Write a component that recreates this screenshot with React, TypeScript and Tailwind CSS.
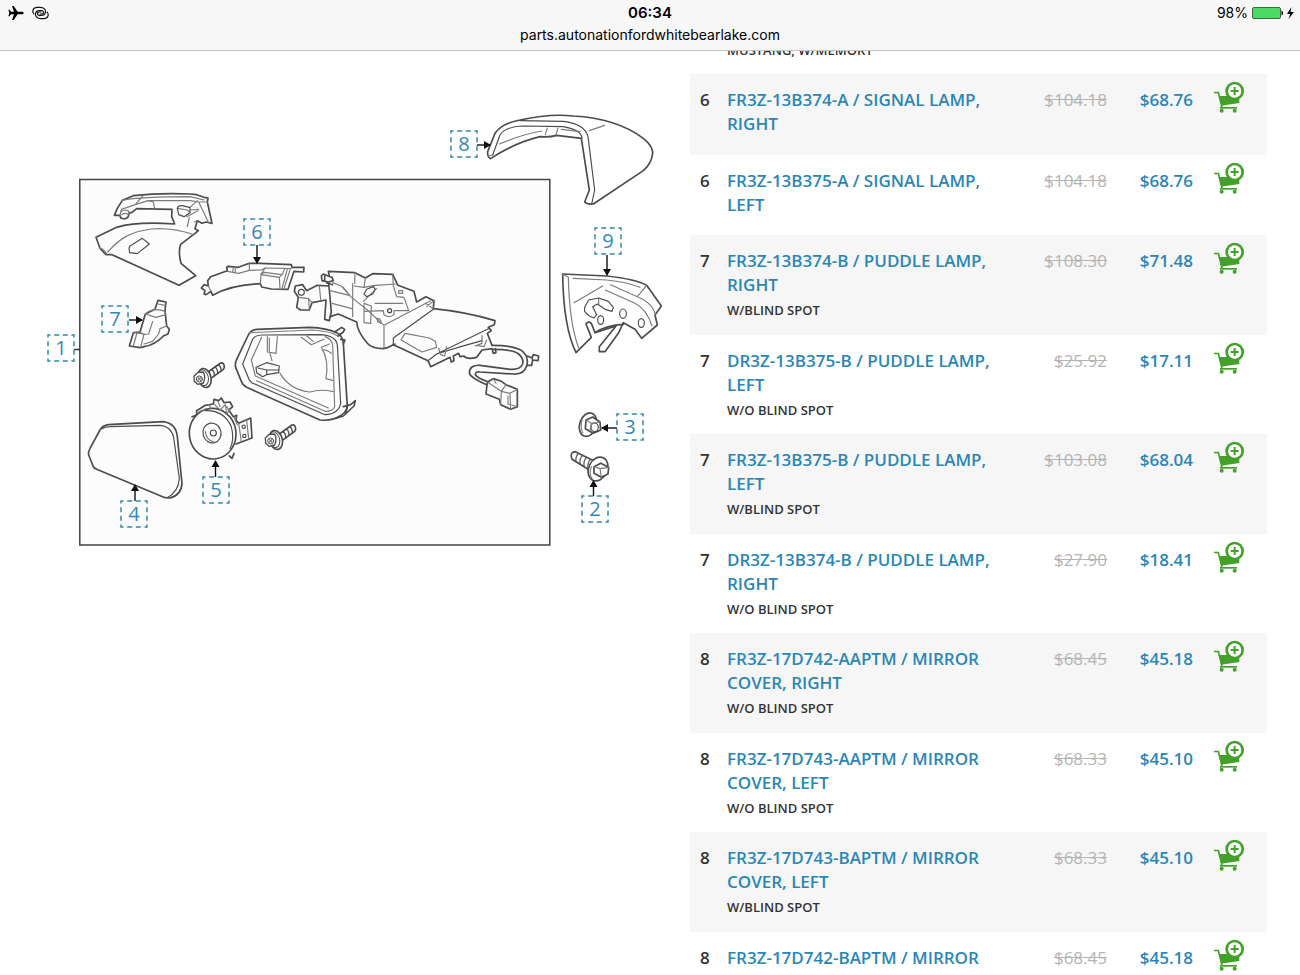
import type { ReactNode } from "react";

type Part = {
  callout: number;
  name: string;
  note?: string;
  list: string;
  price: string;
};

const parts: Part[] = [
  { callout: 6, name: "FR3Z-13B374-A / SIGNAL LAMP, RIGHT", list: "$104.18", price: "$68.76" },
  { callout: 6, name: "FR3Z-13B375-A / SIGNAL LAMP, LEFT", list: "$104.18", price: "$68.76" },
  { callout: 7, name: "FR3Z-13B374-B / PUDDLE LAMP, RIGHT", note: "W/BLIND SPOT", list: "$108.30", price: "$71.48" },
  { callout: 7, name: "DR3Z-13B375-B / PUDDLE LAMP, LEFT", note: "W/O BLIND SPOT", list: "$25.92", price: "$17.11" },
  { callout: 7, name: "FR3Z-13B375-B / PUDDLE LAMP, LEFT", note: "W/BLIND SPOT", list: "$103.08", price: "$68.04" },
  { callout: 7, name: "DR3Z-13B374-B / PUDDLE LAMP, RIGHT", note: "W/O BLIND SPOT", list: "$27.90", price: "$18.41" },
  { callout: 8, name: "FR3Z-17D742-AAPTM / MIRROR COVER, RIGHT", note: "W/O BLIND SPOT", list: "$68.45", price: "$45.18" },
  { callout: 8, name: "FR3Z-17D743-AAPTM / MIRROR COVER, LEFT", note: "W/O BLIND SPOT", list: "$68.33", price: "$45.10" },
  { callout: 8, name: "FR3Z-17D743-BAPTM / MIRROR COVER, LEFT", note: "W/BLIND SPOT", list: "$68.33", price: "$45.10" },
  { callout: 8, name: "FR3Z-17D742-BAPTM / MIRROR", list: "$68.45", price: "$45.18" },
];

// Centre of each callout on the 690 x 520 diagram
const callouts = [
  { n: 1, x: 61, y: 307 },
  { n: 2, x: 595, y: 468 },
  { n: 3, x: 630, y: 386 },
  { n: 4, x: 134, y: 473 },
  { n: 5, x: 216, y: 449 },
  { n: 6, x: 257, y: 191 },
  { n: 7, x: 115, y: 278 },
  { n: 8, x: 464, y: 103 },
  { n: 9, x: 608, y: 200 },
];

function StatusBar() {
  return (
    <header className="relative z-10 h-[51px] shrink-0 border-b border-[#c4c4c6] bg-[#f7f7f7] font-[Inter,sans-serif] text-black">
      <div className="grid grid-cols-3 items-center px-1.5 pt-1">
        <div className="flex items-center gap-2 pl-0.5">
          <svg width="16" height="16" viewBox="0 0 48 48" aria-label="Airplane mode">
            <path d="M47 24c0-3-3-4-6-4H29L17 3h-5l6 17H9l-5-6H1l3 10-3 10h3l5-6h9l-6 17h5l12-17h12c3 0 6-1 6-4z" />
          </svg>
          <svg width="17" height="14" viewBox="98 18 50 42" fill="none" stroke="#111" strokeWidth="3.500" strokeLinecap="round" aria-label="Hotspot">
            <path d="M103 42C97 34 100 22 113 22H122C134 22 139 30 138 37C137 43 133 46 126 46H120C113 46 111 37 119 36H124" />
            <path d="M103 42C97 34 100 22 113 22H122C134 22 139 30 138 37C137 43 133 46 126 46H120C113 46 111 37 119 36H124" transform="rotate(180 123 39)" />
          </svg>
        </div>
        <div className="text-center text-[15px] leading-[18px] font-semibold">06:34</div>
        <div className="flex items-center justify-end gap-1 text-[14px] leading-[18px]">
          <span>98%</span>
          <svg width="42" height="12" viewBox="0 0 42 12" aria-label="Battery charging">
            <rect x=".5" y=".5" width="28" height="11" rx="1.5" fill="#4cd964" stroke="#3c6b44" />
            <path d="M29.5 3.500c2 .5 2 4.500 0 5z" />
            <path d="M39.500 0 35 7h3.200L36.500 12 42 5h-3.500z" />
          </svg>
        </div>
      </div>
      <p className="pt-1 text-center text-[14px] leading-[18px]">
        parts.autonationfordwhitebearlake.com
      </p>
    </header>
  );
}

function CartIcon() {
  return (
    <svg width="32" height="32" viewBox="640 240 96 96" fill="#43a02a">
      <path d="M643 274.500h13l10 38v8" fill="none" stroke="#43a02a" strokeWidth="5" />
      <path d="M657 285h62v21l-55 8z" />
      <path d="M661 318h51v5h-51z" />
      <circle cx="666" cy="329" r="6" />
      <circle cx="705" cy="329" r="6" />
      <circle cx="705" cy="270" r="28" />
      <circle cx="705" cy="270" r="20" fill="#fff" />
      <path d="M705 258v24M693 270h24" stroke="#43a02a" strokeWidth="6" />
    </svg>
  );
}

// Each part is drawn at three units per pixel, from its own corner
function Sketch({ x, y, children }: { x: number; y: number; children: ReactNode }) {
  return (
    <g
      transform={`translate(${x} ${y}) scale(0.33333)`}
      fill="none"
      stroke="#4c4c4c"
      strokeWidth="5"
      strokeLinejoin="round"
      strokeLinecap="round"
    >
      {children}
    </g>
  );
}

function Fine({ d }: { d: string }) {
  return <path d={d} stroke="#7c7c7c" strokeWidth="3.5" />;
}

function Arrow({ x1, y1, x2, y2 }: { x1: number; y1: number; x2: number; y2: number }) {
  const angle = (Math.atan2(y2 - y1, x2 - x1) * 180) / Math.PI;
  return (
    <g stroke="#111" strokeWidth="1.4" fill="#111">
      <path d={`M${x1} ${y1}L${x2} ${y2}`} />
      <path d="M1 0-6-4V4z" stroke="none" transform={`translate(${x2} ${y2}) rotate(${angle})`} />
    </g>
  );
}

function Screw() {
  return (
    <>
      <path d="M384 186 422 159Q433 157 433 172L430 178 396 203" fill="#fdfdfd" />
      <path d="M395 179Q404 184 403 198M405 171Q414 177 413 191M415 164Q424 170 423 184" strokeWidth="4" />
      <ellipse cx="374" cy="204" rx="19" ry="29" transform="rotate(-14 374 204)" fill="#fdfdfd" />
      <ellipse cx="369" cy="203" rx="16" ry="24" transform="rotate(-14 369 203)" strokeWidth="3" />
      <path d="M370 186 354 187 342 198 343 214 353 223 370 219Q378 202 370 186Z" fill="#fdfdfd" strokeWidth="4" />
      <circle cx="358" cy="207" r="9" strokeWidth="3" />
      <Fine d="M354 203 362 211M362 202 354 211" />
    </>
  );
}

function Diagram() {
  return (
    <svg viewBox="0 41 690 520" className="block w-full" aria-label="Exploded view of the outside mirror">
      <rect x="79.800" y="179.500" width="470" height="365.500" fill="#fcfcfc" stroke="#444" strokeWidth="1.500" />

      <Sketch x={80} y={180}>
        <path d="M103 106 112 85 127 61 160 47Q240 38 330 42L350 44 372 52 384 54 382 66 396 130 378 126 366 130 352 122 345 146 355 152 345 160 302 193Q294 215 303 250L347 287 297 316 96 224H78L60 205 48 172 110 142Q170 124 284 132L275 110 276 88 170 86 155 98 148 98Q146 115 134 117L122 114 120 106Z" />
        <Fine d="M120 106 124 88 166 74 204 62 220 66 224 86M127 61Q180 50 330 50L372 60M166 74 188 48M204 62H330L356 66 382 66M356 66 386 128M124 96Q128 88 144 92L148 98M126 104Q135 96 146 104" />
        <Fine d="M292 85 322 90 330 98M330 82 352 62M330 90 356 88M320 110 354 92M322 140 328 112M343 126 352 122" />
        <path d="M292 85Q294 76 308 77L330 83V98L312 110 296 104Z" strokeWidth="3.500" />
        <Fine d="M83 216C120 175 150 155 215 147C260 143 300 150 342 164" />
        <path d="M147 204 150 198 187 175 208 192 172 221 149 218Z" strokeWidth="3.500" />
        <Fine d="M60 205Q70 205 80 222" />

        <path d="M440 262 445 259 475 262 508 250 540 250 634 254 636 262H672L671 276 642 274 624 328 574 327 545 321 541 311Q450 315 398 346L393 334 378 344 372 342 375 332 364 324 372 314 385 318 383 302 392 290 442 272Z" />
        <Fine d="M443 274 475 280 508 271V250M460 262 458 276M466 262V278M508 271 545 270 555 264 634 266M543 282 556 264M541 311 543 284 598 292 600 328M543 284 552 277 606 284 598 292M606 284 614 268M622 268 606 325M630 270 612 326M385 318 393 334" />

        <path d="M225 388 234 361 258 366 255 392 260 438 268 448 264 462 250 468Q225 495 192 500L180 503 148 498 160 458 180 456 196 402Z" />
        <Fine d="M196 402 206 394 225 388 250 392 256 398M196 402 228 412 258 404M218 424 206 462 190 464M160 458 192 462 182 502M170 462 160 498M180 456 190 462M192 492 218 484 236 462 240 446 260 438M234 372 256 376" />
      </Sketch>

      <Sketch x={280} y={250}>
        <path d="M148 78 145 64 225 68 256 84 278 71 338 73 354 106 402 124 410 156 438 140 462 152 460 176Q560 186 645 212L643 224 625 232 634 242 622 250 636 286" />
        <path d="M340 284 444 332 452 350 510 322 514 336 522 332 520 318 536 310 540 320 552 318Q560 330 590 322L606 300 636 296 640 310 648 308 646 296" />
        <path d="M444 332 470 312 625 236M340 284V264L460 178M470 312Q540 290 606 272" strokeWidth="3.500" />
        <path d="M146 100 148 120 154 186 150 202M150 202 148 212 134 208 138 150 96 158 88 180H62L50 172 55 142 43 124 46 108 68 104 80 122 112 106 146 108" />
        <path d="M150 200 175 192 230 216Q232 245 262 280Q275 296 310 296L325 292 345 282" />
        <circle cx="64" cy="127" r="9" strokeWidth="3.500" />
        <path d="M150 80 130 72 124 78 126 92 145 96 160 92 156 82ZM134 74V92M140 98 158 104" />
        <Fine d="M55 142 86 146 88 180M86 146 96 158M118 108 122 148M158 98 184 108 212 140 262 180 312 226V294M312 226 452 152M212 140 190 112M225 68 224 100M150 122 208 136M156 160 216 176M218 100V200M256 84 252 112 222 108M252 112 286 106 350 102M250 154 268 136 290 116" />
        <path d="M252 132 260 118 280 110 286 118 278 132 260 140Z" strokeWidth="3.500" />
        <Fine d="M338 76 340 108 350 140 372 142 386 182M285 160H368M252 184 310 182 312 194Q328 206 342 194V182H386M252 164V218L272 220 274 168 252 160M356 122H368V130H356ZM290 205Q305 205 303 220L294 216Z" />
        <circle cx="329" cy="182" r="6" strokeWidth="3.500" />
        <Fine d="M375 250 363 270 426 306 470 292 466 274 448 264ZM476 294 482 314 494 318 500 290M590 286 612 290 620 270M606 256V280L585 288M436 160 460 176M462 152 440 170" />
        <path d="M636 286Q700 286 725 302Q748 320 740 348Q732 374 700 372L600 366Q586 364 586 374Q590 384 626 396M640 298Q700 298 716 312Q732 326 728 342Q720 360 690 358L600 346Q568 344 568 370Q572 384 620 404" />
        <path d="M742 318 756 324 760 314 776 318 774 332 758 330 755 346 740 346M756 324 758 330" />
        <path d="M622 396 640 386 664 394 678 404 712 418V470L692 478 662 464 658 448 618 432Z" />
        <Fine d="M622 396 664 424 662 464M664 424 678 404M664 424 690 430 692 478M690 430 712 418M684 438V462L706 468M640 386 648 400" />
      </Sketch>

      <Sketch x={80} y={310}>
        <path d="M505 75Q512 60 530 58L690 52Q740 54 770 68Q788 76 790 100L802 290Q798 308 780 318Q755 334 720 330L500 232Q488 226 484 214L467 172Q464 160 470 148Z" />
        <path d="M518 88Q524 76 545 75L725 74Q768 78 772 105L782 280Q776 312 735 314L515 218 507 208 488 162Z" strokeWidth="3.500" />
        <Fine d="M508 68 700 60Q760 66 776 80M545 82 514 150 526 198 745 294M735 80Q754 86 758 106L764 290Q758 304 735 304L530 212" />
        <path d="M764 66 785 52 794 58 790 66 774 78M782 88 795 90 790 102M790 290 812 284 826 272 822 288 790 318 770 324M802 290 796 312" />
        <Fine d="M562 80V126L588 130 592 80M568 84V124M570 130 576 152M600 190Q630 240 690 246Q722 236 760 245M738 206Q748 150 724 112L748 102M754 130Q738 118 730 120M738 206 760 212M664 82 694 104 732 88M680 78 700 94" />
        <path d="M528 172 560 158 598 168 596 188 560 194 548 200 530 188ZM534 174 560 180 596 180M560 180V194" strokeWidth="3.500" />

        <path d="M60 360Q68 346 85 344L250 335Q288 340 292 380L306 520Q304 555 270 564L255 563 50 478Q40 474 38 465L26 435Q24 425 30 415Z" />
        <path d="M66 356Q74 350 90 350L240 346Q278 350 282 390L298 505Q296 545 262 563" strokeWidth="3.500" />

        <path d="M336 320 350 315V302L376 286 400 282 402 268 416 272 424 264 432 278 450 276 458 290 446 300 460 320 470 316 468 330 476 340 512 324 516 384 468 402M448 438 456 445 462 430" />
        <ellipse cx="398" cy="371" rx="70" ry="76" transform="rotate(-8 398 371)" fill="#fdfdfd" />
        <path d="M376 302Q432 300 454 350Q464 390 450 416" strokeWidth="3.500" />
        <ellipse cx="396" cy="369" rx="27" ry="30" transform="rotate(-15 396 369)" strokeWidth="3.500" />
        <circle cx="400" cy="369" r="9" strokeWidth="3.500" />
        <Fine d="M376 364Q378 390 402 396M476 340 484 394M500 330 506 386M356 306 378 296M386 284 394 296M404 284 420 300 436 284 440 310M450 300 438 314M414 274 420 290M440 290 446 300M462 322 472 344" />
        <circle cx="491" cy="350" r="5" strokeWidth="3.500" />
        <circle cx="493" cy="378" r="5" strokeWidth="3.500" />

        <Screw />
        <g transform="translate(214 186)">
          <Screw />
        </g>
      </Sketch>

      <Sketch x={440} y={100}>
        <path d="M143 155 165 100Q185 70 240 60Q330 40 400 48Q530 55 610 115Q640 140 638 160Q635 190 610 212L460 312Q440 314 434 306L448 270 424 115 350 106Q330 112 300 110Q220 130 152 176Q142 172 143 155Z" />
        <path d="M158 165 180 105Q195 80 250 78L370 80Q425 90 426 115M240 62 370 64Q435 72 444 110L464 270 455 312" strokeWidth="3.500" />
        <Fine d="M178 132Q250 102 305 93M322 84 316 104M354 84 348 104M364 88 420 95M448 92 494 76M146 168 160 164" />
      </Sketch>

      <Sketch x={550} y={220}>
        <path d="M38 162 170 168Q260 178 290 196L334 258 315 285 322 315 275 355 255 328 220 308 205 340 165 395H148V380L198 318 135 338 124 310Q114 302 108 312L124 352 78 398Q40 320 38 162Z" />
        <path d="M135 338Q170 315 220 313" />
        <Fine d="M55 172Q58 310 86 384M70 175 170 180Q230 186 270 202M72 248 158 198M166 210 255 250Q290 268 306 318M182 194 262 230Q310 250 316 285M262 230 290 196M146 236V252M38 162 55 172" />
        <path d="M104 262 116 240 146 234 175 244 190 262 186 274 165 268 142 252 128 260 140 284 132 294 118 288 104 275Z" strokeWidth="3.500" />
        <ellipse cx="152" cy="300" rx="9" ry="13" strokeWidth="3.500" />
        <ellipse cx="219" cy="281" rx="10" ry="14" strokeWidth="3.500" />
        <ellipse cx="274" cy="309" rx="9" ry="13" strokeWidth="3.500" />
      </Sketch>

      <Sketch x={560} y={400}>
        <ellipse cx="84" cy="74" rx="25" ry="36" transform="rotate(18 84 74)" />
        <path d="M78 60 98 51 120 66 122 90 100 100 76 86Z" fill="#fdfdfd" />
        <ellipse cx="104" cy="82" rx="11" ry="13" strokeWidth="3.500" />
        <Fine d="M78 60 94 70 120 66M94 70 90 92M66 60Q60 80 68 98" />
        <path d="M36 178Q28 156 46 155L104 184 88 210Z" />
        <path d="M56 160Q46 168 48 184M68 166Q58 174 60 192M80 172Q70 180 72 199M92 178Q82 186 84 206" strokeWidth="3.500" />
        <ellipse cx="114" cy="207" rx="28" ry="37" transform="rotate(25 114 207)" fill="#fff" />
        <path d="M102 200 122 190 146 202 144 222 124 232 102 220Z" fill="#fff" />
        <Fine d="M102 200 120 206 146 202M120 206 124 232M94 200Q86 220 96 236" />
      </Sketch>

      <path d="M74 349.500H80" stroke="#333" strokeWidth="1.500" />
      <Arrow x1={257} y1={245} x2={257} y2={263} />
      <Arrow x1={607} y1={255} x2={607} y2={275} />
      <Arrow x1={477} y1={145} x2={490} y2={145} />
      <Arrow x1={129} y1={320} x2={142} y2={320} />
      <Arrow x1={135} y1={501} x2={135} y2={485} />
      <Arrow x1={215.5} y1={477} x2={215.5} y2={461} />
      <Arrow x1={617} y1={428} x2={602} y2={428} />
      <Arrow x1={593.5} y1={496} x2={593.5} y2={481} />
    </svg>
  );
}

function Callout({ n, x, y }: { n: number; x: number; y: number }) {
  return (
    <button
      type="button"
      className="absolute flex size-7 -translate-x-1/2 -translate-y-1/2 items-center justify-center text-[20px] leading-7 text-[#3389b5]"
      style={{ left: `${(x / 690) * 100}%`, top: `${(y / 520) * 100}%` }}
    >
      <svg className="absolute inset-0" width="28" height="28" viewBox="0 0 28 28" aria-hidden="true">
        <rect x="1" y="1" width="26" height="26" fill="none" stroke="#3389a8" strokeWidth="1.500" strokeDasharray="5 3.667" strokeDashoffset="2.500" />
      </svg>
      {n}
    </button>
  );
}

function PartRow({ part }: { part: Part }) {
  return (
    <tr className="group h-20 align-top text-[17px] leading-6 font-semibold text-[#2a86b5] odd:h-[81px] odd:bg-[#f6f6f6]">
      <td className="pt-3.5 pl-2.5 text-[#333]">{part.callout}</td>
      <td className="pt-3.5 pb-[15px] group-odd:pb-4">
        <a href="#part" className="block">
          {part.name}
        </a>
        {part.note && (
          <p className="mt-1 text-[13px] leading-[18px] text-[#333]">{part.note}</p>
        )}
      </td>
      <td className="pt-3.5 text-right font-normal text-[#b4b4b4]">
        <s>{part.list}</s>
      </td>
      <td className="pt-3.5 text-right">{part.price}</td>
      <td className="pt-[7px] pl-5">
        <button type="button" aria-label="Add to cart" className="block">
          <CartIcon />
        </button>
      </td>
    </tr>
  );
}

export default function App() {
  return (
    <div className="flex h-screen flex-col overflow-hidden bg-white font-['Open_Sans',sans-serif]">
      <StatusBar />
      <main className="-mt-2.5 grid min-h-0 flex-1 grid-cols-[69fr_61fr] overflow-hidden">
        <section className="relative self-start">
          <Diagram />
          {callouts.map((c) => (
            <Callout key={c.n} n={c.n} x={c.x} y={c.y} />
          ))}
        </section>
        <section className="pr-[33px]">
          <p className="pb-[15px] pl-[37px] text-[13px] leading-[18px] font-semibold text-[#333]">
            MUSTANG, W/MEMORY
          </p>
          <table className="w-full table-fixed">
            <colgroup>
              <col className="w-[37px]" />
              <col />
              <col className="w-[110px]" />
              <col className="w-[86px]" />
              <col className="w-[74px]" />
            </colgroup>
            <tbody>
              {parts.map((part) => (
                <PartRow key={part.name} part={part} />
              ))}
            </tbody>
          </table>
        </section>
      </main>
    </div>
  );
}
